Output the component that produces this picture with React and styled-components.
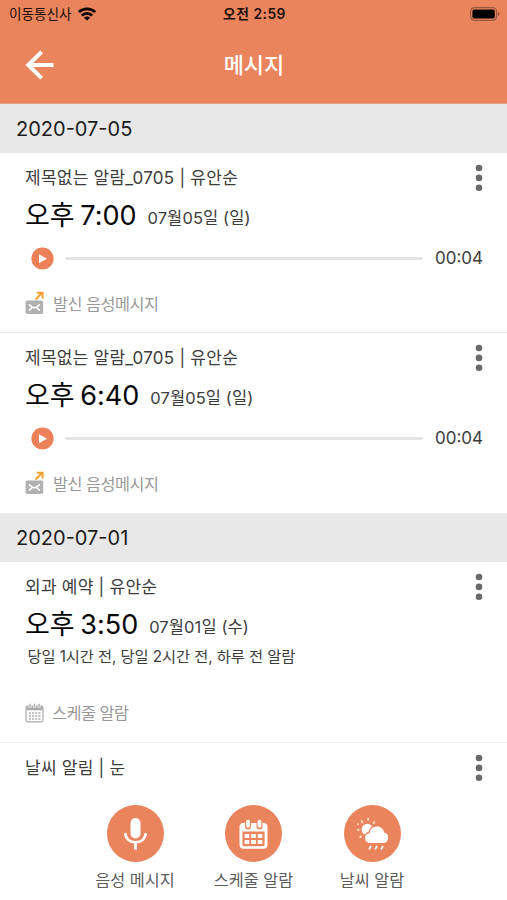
import React from 'react';
import styled, { createGlobalStyle } from 'styled-components';

const ORANGE = '#ea845d';

const GlobalStyle = createGlobalStyle`
  * { box-sizing: border-box; }
  body {
    margin: 0;
    background: #fff;
    font-family: Inter, "Noto Sans CJK KR", sans-serif;
    color: #3c3c3c;
    overflow: hidden;
  }
  svg { display: block; flex: none; }
`;

const Screen = styled.div`
  width: 507px;
  height: 900px;
  display: flex;
  flex-direction: column;
  overflow: hidden;
  background: #fff;
`;

const Header = styled.header`
  height: 104px;
  flex: none;
  border-bottom: 1px solid #ec9d7f;
  background: ${ORANGE};
`;

const StatusBar = styled.div`
  height: 27px;
  display: grid;
  grid-template-columns: 1fr auto 1fr;
  align-items: center;
  padding: 0 7px 0 9px;
  color: #21100a;
`;

const Carrier = styled.div`
  display: flex;
  align-items: center;
  gap: 6px;
  font-size: 13.6px;
  line-height: 27px;
`;

const Clock = styled.div`
  font-size: 13.8px;
  font-weight: 600;
  letter-spacing: 0.5px;
  line-height: 28px;
  white-space: nowrap;
`;

const BatterySlot = styled.div`
  display: flex;
  justify-content: flex-end;
`;

const TitleBar = styled.div`
  height: 76px;
  display: grid;
  grid-template-columns: 1fr auto 1fr;
  align-items: center;
  padding: 0 24px 0 25px;
  color: #fff;
`;

const BackButton = styled.button`
  border: 0;
  padding: 0;
  background: none;
  color: inherit;
  justify-self: start;
`;

const Title = styled.h1`
  margin: 0;
  font-size: 22px;
  font-weight: 500;
  line-height: 30px;
`;

const DateHeading = styled.h2`
  margin: 0;
  height: 49px;
  flex: none;
  padding: 1px 16px 0;
  background: #e8e8e8;
  color: #1c1c1c;
  font-size: 20px;
  font-weight: 400;
  line-height: 49px;
`;

const Card = styled.article`
  position: relative;
  height: ${(p) => p.$height}px;
  flex: none;
  padding: 12px 25px 0;
  border-bottom: ${(p) => (p.$last ? 0 : '1px solid #ebebeb')};
  overflow: hidden;
`;

const CardTitle = styled.div`
  height: 26px;
  font-size: 17px;
  letter-spacing: 0.25px;
  line-height: 26px;
`;

const MenuButton = styled.button`
  position: absolute;
  top: 11px;
  right: 24px;
  padding: 0;
  border: 0;
  background: none;
  color: #696969;
`;

const TimeRow = styled.div`
  display: flex;
  align-items: baseline;
  height: 45px;
  line-height: 50px;
  gap: 11px;
  white-space: nowrap;
`;

const Time = styled.span`
  color: #050505;
  font-size: 27px;
  word-spacing: -2px;
`;

const Day = styled.span`
  font-size: 16.5px;
  letter-spacing: 0.1px;
  transform: translateY(-1px);
`;

const Player = styled.div`
  display: flex;
  align-items: center;
  height: 44px;
  padding-left: 6px;
`;

const Track = styled.div`
  flex: 1;
  height: 3px;
  margin: 0 12px 0 11px;
  border-radius: 2px;
  background: #e4e4e4;
`;

const Duration = styled.span`
  width: 47px;
  font-size: 17px;
  white-space: nowrap;
`;

const Reminders = styled.div`
  height: 46px;
  padding: 0 2.5px;
  font-size: 15.3px;
  letter-spacing: -0.08px;
  line-height: 23px;
  white-space: nowrap;
`;

const Kind = styled.div`
  display: flex;
  align-items: center;
  gap: 8px;
  height: 44px;
  margin-top: ${(p) => p.$offset || 0}px;
  color: #989898;
  font-size: 16.3px;
  letter-spacing: -0.5px;
  line-height: 44px;
`;

const BottomBar = styled.nav`
  height: 112px;
  flex: none;
  display: flex;
  justify-content: center;
  padding-top: 17px;
  background: #fff;
`;

const Action = styled.button`
  width: 118.5px;
  padding: 0;
  border: 0;
  background: none;
  display: flex;
  flex-direction: column;
  align-items: center;
  gap: 6px;
  font: inherit;
  font-size: 16.3px;
  line-height: 24px;
  color: #5c5c5c;
  white-space: nowrap;
`;

const ActionDisc = styled.span`
  width: 57px;
  height: 57px;
  border-radius: 50%;
  background: ${ORANGE};
  display: flex;
`;

const WifiIcon = () => (
  <svg width="18" height="14" viewBox="0 0 18 14" fill="none" stroke="#090403" strokeWidth="2.7">
    <path d="M.8 5.1a11.8 11.8 0 0 1 16.4 0" />
    <path d="M3.8 8.500a7.400 7.400 0 0 1 10.400 0" />
    <path d="M9 13.500 5.900 10.700a4.400 4.400 0 0 1 6.200 0Z" fill="#090403" stroke="none" />
  </svg>
);

const BatteryIcon = () => (
  <svg width="30" height="14" viewBox="0 0 30 14">
    <rect x=".6" y=".6" width="26" height="12.8" rx="4" fill="none" stroke="#9c583e" strokeWidth="1.2" />
    <rect x="2.4" y="2.4" width="22.4" height="9.2" rx="2.2" fill="#000" />
    <path d="M28 5c2 .6 2 3.4 0 4Z" fill="#9c583e" />
  </svg>
);

const BackIcon = () => (
  <svg width="29" height="30" viewBox="0 0 29 30" fill="none" stroke="currentColor" strokeWidth="4">
    <path d="M16.6 1.800 3.200 15l13.400 13.200M3 15h25.500" />
  </svg>
);

const DotsIcon = () => (
  <svg width="8" height="28" viewBox="0 0 8 28" fill="currentColor">
    <circle cx="4" cy="4" r="3.3" />
    <circle cx="4" cy="13.9" r="3.3" />
    <circle cx="4" cy="23.8" r="3.3" />
  </svg>
);

const PlayIcon = () => (
  <svg width="23" height="23" viewBox="0 0 23 23">
    <circle cx="11.5" cy="11.5" r="11.1" fill="#ec8159" />
    <path d="m8 7.2 8 4.5-8 4.5Z" fill="#fff" />
  </svg>
);

const SentMailIcon = () => (
  <svg width="20" height="26" viewBox="0 0 20 26">
    <rect x=".6" y="9.500" width="17.600" height="13.500" rx="1.800" fill="#b0b0b0" />
    <path d="m3.800 13.300 3.200 2.500q2.400 1.700 4.800 0l3.200-2.500M4 19.600l3.300-3.200m7.500 3.200-3.300-3.200" fill="none" stroke="#fff" strokeWidth="1.600" />
    <path d="m10.600 8.500 6-6.200M11.800 1.800H17.600V7.600" fill="none" stroke="#f0a435" strokeWidth="2.100" />
  </svg>
);

const SmallCalendarIcon = () => (
  <svg width="19" height="20" viewBox="0 0 19 20" fill="none" stroke="#ababab">
    <rect x="1" y="3.2" width="17" height="15.6" rx="1.5" strokeWidth="1.2" />
    <path d="M1.5 5.5h16" strokeWidth="3.6" />
    <path d="M5 .8v4M9.5.8v4M14 .8v4" stroke="#fff" strokeWidth="2.6" />
    <path d="M5 .8v3.4M9.5.8v3.4M14 .8v3.4" strokeWidth="1.4" />
    <path d="M4 10h11.5M4 13h11.5M4 16h11.5" strokeWidth="1.4" strokeDasharray="2 1.15" />
  </svg>
);

const MicIcon = () => (
  <svg width="57" height="57" viewBox="0 0 57 57" fill="none" stroke="#fff" strokeWidth="2.6">
    <rect x="23.5" y="13" width="10" height="20.5" rx="5" fill="#fff" stroke="none" />
    <path d="M18.2 28.2c.6 5.9 4.8 9.1 10.3 9.1s9.7-3.2 10.3-9.1" />
    <path d="M28.5 37v7.5" strokeWidth="3" />
  </svg>
);

const CalendarIcon = () => (
  <svg width="57" height="57" viewBox="0 0 57 57">
    <rect x="14.5" y="18" width="28" height="25.8" rx="4" fill="#fff" />
    <path d="M17.4 26.4h22.2v12.8q0 2-2 2H19.4q-2 0-2-2Z" fill={ORANGE} />
    <path d="M23 16v5.5M34.500 16v5.500" stroke={ORANGE} strokeWidth="6" strokeLinecap="round" />
    <path d="M23 16.600v4.200M34.500 16.600v4.200" stroke="#fff" strokeWidth="3.800" strokeLinecap="round" />
    <path d="M19.600 31h17.800M19.600 37h17.800" stroke="#fff" strokeWidth="3.900" strokeDasharray="4.700 1.850" />
  </svg>
);

const WeatherIcon = () => (
  <svg width="57" height="57" viewBox="0 0 57 57">
    <circle cx="23.3" cy="24.5" r="5.7" fill="#fff" />
    <path
      d="m17.3 15.5 1.5 2.6M24.2 13v2.7M30.8 16.6l-1.7 2.1M13 24.8h2.4M15.6 32.5l2.1-1.6M13.4 18.7l1.2.8"
      stroke="#ffe4c4"
      strokeWidth="1.7"
    />
    <path
      d="M25.5 38.700a5.600 5.600 0 0 1-.5-11.100c.5-4.200 3.800-6.900 7.800-6.900 4.200 0 7.200 2.500 8 6.400 2.500.6 4.200 2.900 4.200 5.500 0 3.400-2.600 6.100-6 6.100Z"
      fill="#fff"
      stroke={ORANGE}
      strokeWidth="1.500"
    />
    <path d="m27 41-1.900 3.300M33 41l-1.900 3.300M39 41l-1.900 3.300" stroke="#fff" strokeWidth="1.700" />
  </svg>
);

function CardHead({ title }) {
  return (
    <>
      <CardTitle>{title}</CardTitle>
      <MenuButton aria-label="메뉴"><DotsIcon /></MenuButton>
    </>
  );
}

function When({ time, day }) {
  return (
    <TimeRow>
      <Time>{time}</Time>
      <Day>{day}</Day>
    </TimeRow>
  );
}

function VoiceCard({ title, time, day, duration, last }) {
  return (
    <Card $height={180} $last={last}>
      <CardHead title={title} />
      <When time={time} day={day} />
      <Player>
        <PlayIcon />
        <Track />
        <Duration>{duration}</Duration>
      </Player>
      <Kind $offset={2}><SentMailIcon />발신 음성메시지</Kind>
    </Card>
  );
}

const actions = [
  { label: '음성 메시지', Icon: MicIcon },
  { label: '스케줄 알람', Icon: CalendarIcon },
  { label: '날씨 알람', Icon: WeatherIcon },
];

export default function App() {
  return (
    <Screen>
      <GlobalStyle />
      <Header>
        <StatusBar>
          <Carrier>이동통신사<WifiIcon /></Carrier>
          <Clock>오전 2:59</Clock>
          <BatterySlot><BatteryIcon /></BatterySlot>
        </StatusBar>
        <TitleBar>
          <BackButton aria-label="뒤로"><BackIcon /></BackButton>
          <Title>메시지</Title>
        </TitleBar>
      </Header>
      <DateHeading>2020-07-05</DateHeading>
      <VoiceCard title="제목없는 알람_0705 | 유안순" time="오후 7:00" day="07월05일 (일)" duration="00:04" />
      <VoiceCard title="제목없는 알람_0705 | 유안순" time="오후 6:40" day="07월05일 (일)" duration="00:04" last />
      <DateHeading>2020-07-01</DateHeading>
      <Card $height={181}>
        <CardHead title="외과 예약 | 유안순" />
        <When time="오후 3:50" day="07월01일 (수)" />
        <Reminders>당일 1시간 전, 당일 2시간 전, 하루 전 알람</Reminders>
        <Kind><SmallCalendarIcon />스케줄 알람</Kind>
      </Card>
      <Card $height={45} $last>
        <CardHead title="날씨 알림 | 눈" />
      </Card>
      <BottomBar>
        {actions.map(({ label, Icon }) => (
          <Action key={label}>
            <ActionDisc><Icon /></ActionDisc>
            {label}
          </Action>
        ))}
      </BottomBar>
    </Screen>
  );
}
